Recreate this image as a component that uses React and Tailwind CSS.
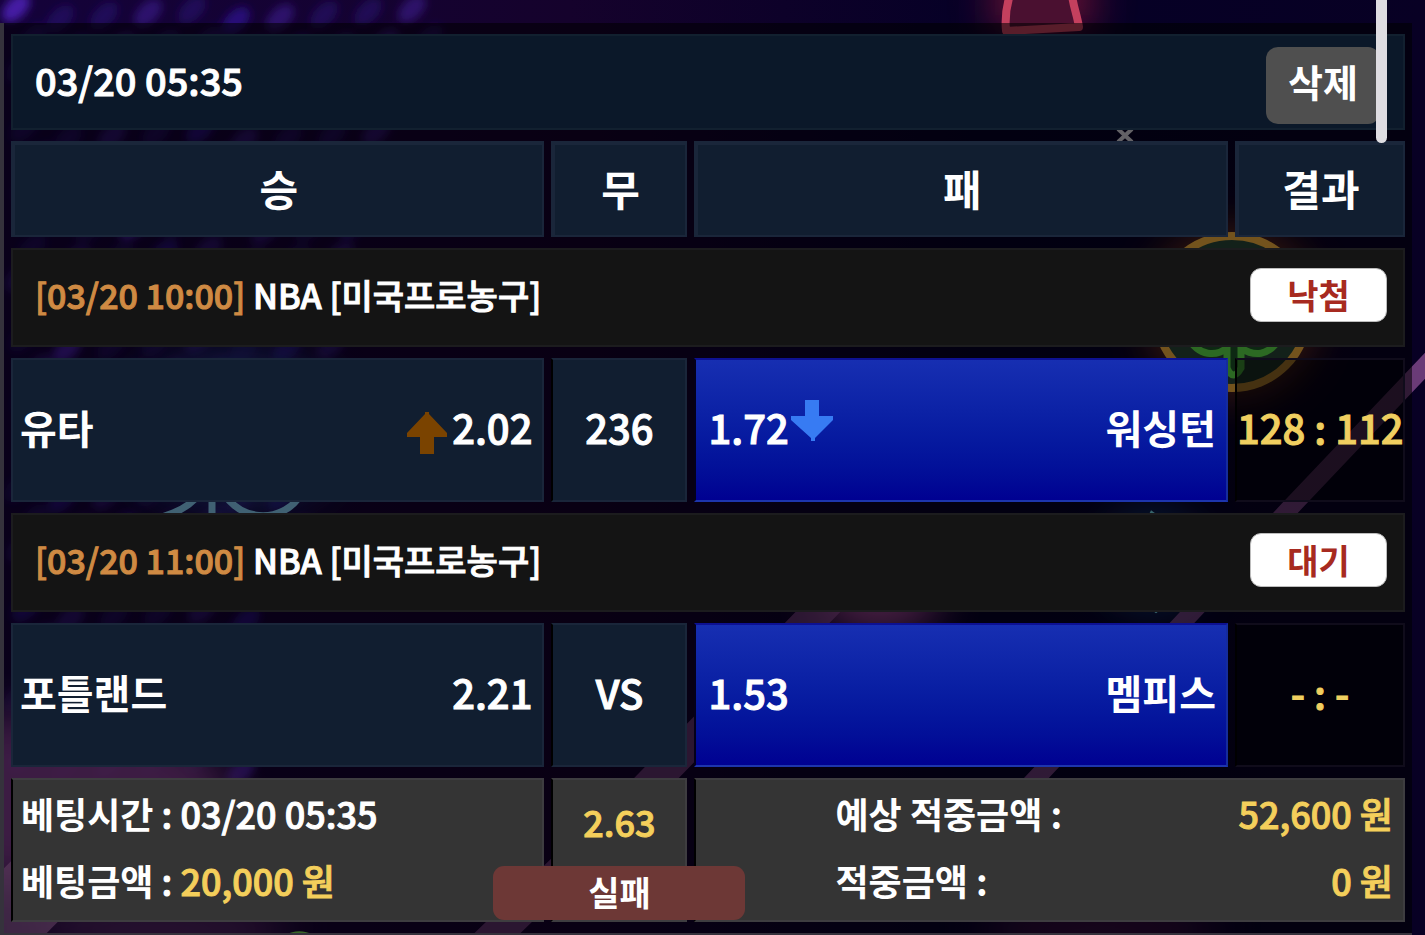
import React, { useState } from 'react';

const bet = {
  time: '03/20 05:35',
  amount: '20,000 원',
  odds: '2.63',
  expected: '52,600 원',
  won: '0 원',
  status: '실패',
};

const games = [
  { id: 1, date: '03/20 10:00', league: 'NBA [미국프로농구]', state: '낙첨', home: '유타', homeOdds: '2.02', up: true, line: '236', awayOdds: '1.72', down: true, away: '워싱턴', score: '128 : 112' },
  { id: 2, date: '03/20 11:00', league: 'NBA [미국프로농구]', state: '대기', home: '포틀랜드', homeOdds: '2.21', up: false, line: 'VS', awayOdds: '1.53', down: false, away: '멤피스', score: '- : -' },
];

function ArrowUp() {
  return (
    <svg width="42" height="42" viewBox="0 0 42 42" aria-hidden="true">
      <path d="M19 0h4v2l18 19v4H28v17H14V25H1v-4L19 2z" fill="#7a4300" />
    </svg>
  );
}

function ArrowDown() {
  return (
    <svg width="42" height="42" viewBox="0 0 42 42" aria-hidden="true">
      <path d="M14 0h14v16h14v4L24 38v3h-4v-3L0 20v-4h14z" fill="#377bf3" />
    </svg>
  );
}

// neon casino wallpaper behind the whole page
function Backdrop() {
  const streaks = [];
  for (let i = 0; i < 26; i++) {
    for (let j = 0; j < 10; j++) {
      const x = 16 + j * 44 + ((i * 17) % 30);
      const y = i * 30 + 8 + ((j * 11) % 14);
      if (x + y * 0.25 > 440) continue;
      streaks.push(
        <ellipse key={`${i}-${j}`} cx={x} cy={y} rx="17" ry="10" transform={`rotate(-45 ${x} ${y})`} fill={(i + j) % 3 === 0 ? '#4a1fb0' : '#2a1180'} opacity={(i * 7 + j * 3) % 5 === 0 ? 0.9 : 0.45} />
      );
    }
  }
  return (
    <svg className="absolute inset-0 h-full w-full" viewBox="0 0 1425 935" preserveAspectRatio="none" aria-hidden="true">
      <defs>
        <linearGradient id="night" x1="0" y1="0" x2="1" y2="0">
          <stop offset="0" stopColor="#14023a" />
          <stop offset="0.4" stopColor="#15022c" />
          <stop offset="0.7" stopColor="#050026" />
          <stop offset="1" stopColor="#080024" />
        </linearGradient>
        <filter id="soft"><feGaussianBlur stdDeviation="4" /></filter>
        <filter id="glow" x="-60%" y="-60%" width="220%" height="220%"><feGaussianBlur stdDeviation="22" /></filter>
      </defs>
      <rect width="1425" height="935" fill="url(#night)" />
      <g filter="url(#soft)">{streaks}</g>

      <ellipse cx="60" cy="800" rx="170" ry="90" fill="#9a4aa5" opacity="0.85" filter="url(#glow)" />
      <ellipse cx="160" cy="930" rx="130" ry="30" fill="#7a3a85" opacity="0.7" filter="url(#glow)" />
      <ellipse cx="1100" cy="930" rx="120" ry="30" fill="#6b1a5a" opacity="0.5" filter="url(#glow)" />
      <ellipse cx="235" cy="430" rx="110" ry="80" fill="#28409a" opacity="0.8" filter="url(#glow)" />
      <ellipse cx="1152" cy="560" rx="50" ry="50" fill="#1c5aa0" opacity="0.7" filter="url(#glow)" />
      <ellipse cx="880" cy="595" rx="60" ry="40" fill="#c65ab0" opacity="0.8" filter="url(#glow)" />

      <g fill="none">
        <path d="M1440 350 1290 508 950 870" stroke="#a05aa4" strokeWidth="18" opacity="0.65" />
        <path d="M880 548 640 795 480 950" stroke="#a05aa4" strokeWidth="32" opacity="0.55" />
        <path d="M-40 966 110 816" stroke="#d48ad4" strokeWidth="76" opacity="0.6" />
      </g>

      <path d="M995-30h95v60h-95z" fill="#c01a40" opacity="0.6" filter="url(#glow)" />
      <path d="M1010-5C1005 10 1005 20 1006 31L1079 27C1077 15 1073 5 1072-5" fill="#4a1030" stroke="#c4405e" strokeWidth="8" strokeLinejoin="round" />

      <path d="M1118 129l14 13M1132 129l-14 13" stroke="#dcd8e2" strokeWidth="4" />

      <circle cx="1232" cy="312" r="82" fill="#c05a14" opacity="0.7" filter="url(#glow)" />
      <circle cx="1232" cy="312" r="76" fill="#2c4a3a" stroke="#ffb840" strokeWidth="8" />
      <path d="M1232 248c-22 0-30 26-16 42-30-6-44 22-30 42 12 22 30 20 40 12v20q6 14 14 0v-20c12 8 28 10 40-12 14-20 0-48-30-42 14-16 6-42-20-42z" fill="#1e5a2a" stroke="#62e84e" strokeWidth="7" transform="translate(1 4)" />

      <path d="M150 520C185 512 200 500 204 480M212 520V480M220 480C228 524 288 528 304 488" stroke="#8fd8ff" strokeWidth="7" fill="none" />
      <path d="M1152 514l12 8v82l-8 6-8-6v-82z" fill="none" stroke="#7ae0f0" strokeWidth="5" />
      <path d="M278 945q20-20 45 0" fill="#2c6a28" stroke="#7fe05a" strokeWidth="7" />
    </svg>
  );
}

function StateBadge({ children }) {
  return (
    <span className="flex h-[54px] w-[137px] items-center justify-center rounded-[11px] border border-[#bdbdbd] bg-white text-[34px] font-bold leading-none text-[#a72a20]">
      {children}
    </span>
  );
}

function GameRows({ game }) {
  return (
    <>
      <tr>
        <td colSpan={4} className="h-[99px] border-2 border-[#1c1c1e] bg-[#141414] p-0 pr-4 pb-1.5 pl-[22px]">
          <div className="flex items-center justify-between text-[34px] font-medium">
            <p className="whitespace-nowrap [-webkit-text-stroke:1px]">
              <span className="text-[#cf8a43]">[{game.date}]</span> {game.league}
            </p>
            <StateBadge>{game.state}</StateBadge>
          </div>
        </td>
      </tr>
      <tr className="text-[40px] font-medium">
        <td className="h-[144px] border-2 border-[#1a263a] bg-[#111e30] p-0 pr-[10px] pb-1.5 pl-[7px]">
          <div className="flex items-center justify-between">
            <span className="font-bold">{game.home}</span>
            <span className="flex h-[54px] items-end gap-1 leading-[54px] [-webkit-text-stroke:1px]">
              {game.up && <ArrowUp />}
              {game.homeOdds}
            </span>
          </div>
        </td>
        <td className="border-2 border-[#1a263a] border-l-black bg-[#111e30] p-0 pb-1.5 text-center [-webkit-text-stroke:1px]">{game.line}</td>
        <td className="border-2 border-t-[#0d1193] border-r-[#152c9d] border-b-[#1d35ad] border-l-[#04001a] bg-linear-to-b from-[#172fb2] to-[#000091] bg-origin-border p-0 pr-[10px] pb-1.5 pl-3">
          <div className="flex items-center justify-between">
            <span className="flex h-[54px] items-start gap-0.5 leading-[54px] [-webkit-text-stroke:1px]">
              {game.awayOdds}
              {game.down && <ArrowDown />}
            </span>
            <span className="font-bold">{game.away}</span>
          </div>
        </td>
        <td className="border-2 border-[#100c1b] border-l-black bg-black/40 p-0 pb-1.5 text-center whitespace-nowrap text-[#f0cf60] [-webkit-text-stroke:1px]">{game.score}</td>
      </tr>
    </>
  );
}

export default function App() {
  const [deleted, setDeleted] = useState(false);

  return (
    <div className="relative min-h-screen overflow-hidden bg-[#050020] pt-[23px] pr-[13px] font-['Noto_Sans_CJK_KR',sans-serif] text-white">
      <Backdrop />

      <main className="relative border-b-2 border-l-4 border-[#35323c] bg-black/55">
        {!deleted && (
          <table className="w-full table-fixed border-separate border-spacing-x-[7px] border-spacing-y-[11px]">
            <colgroup>
              <col />
              <col className="w-[136px]" />
              <col />
              <col className="w-[170px]" />
            </colgroup>
            <thead>
              <tr>
                <td colSpan={4} className="h-[96px] border-2 border-[#12202f] bg-[#0b1829] p-0 pt-1.5 pr-[23px] pl-[22px]">
                  <div className="flex items-center justify-between">
                    <time className="pb-3 text-[38px] font-medium [-webkit-text-stroke:1px]">{bet.time}</time>
                    <button type="button" onClick={() => setDeleted(true)} className="h-[77px] w-[114px] rounded-xl bg-[#4f4f4f] pb-2.5 text-[38px] font-bold">
                      삭제
                    </button>
                  </div>
                </td>
              </tr>
              <tr>
                {['승', '무', '패', '결과'].map((name) => (
                  <th key={name} scope="col" className="h-[96px] border-t-4 border-r-2 border-b-2 border-l-4 border-[#1a263a] bg-[#111e30] p-0 pb-1.5 text-[42px] font-bold">
                    {name}
                  </th>
                ))}
              </tr>
            </thead>
            <tbody>
              {games.map((game) => <GameRows key={game.id} game={game} />)}
            </tbody>
            <tfoot>
              <tr className="text-[36px] leading-[67px] font-medium">
                <td className="h-[144px] border-2 border-[#3e3d40] border-l-black bg-[#343434] p-0 pb-1.5 pl-2 whitespace-nowrap">
                  <p><span className="font-bold">베팅시간</span> <span className="[-webkit-text-stroke:1px]">: {bet.time}</span></p>
                  <p><span className="font-bold">베팅금액</span> <span className="[-webkit-text-stroke:1px]">: <span className="text-[#f4cf5b]">{bet.amount}</span></span></p>
                </td>
                <td className="relative border-2 border-[#3e3d40] border-l-black bg-[#343434] p-0 pt-2 text-center align-top text-[#f4cf5b]">
                  <span className="[-webkit-text-stroke:1px]">{bet.odds}</span>
                  <span className="absolute bottom-0 left-1/2 flex h-[54px] w-[252px] -translate-x-1/2 items-center justify-center rounded-[11px] bg-[#6d3836] pb-0.5 text-[34px] leading-none font-bold text-white">
                    {bet.status}
                  </span>
                </td>
                <td colSpan={2} className="border-2 border-[#3e3d40] border-l-black bg-[#343434] p-0 pr-[10px] pb-1.5 pl-[139px] whitespace-nowrap">
                  <p className="flex justify-between">
                    <span className="font-bold">예상 적중금액 :</span>
                    <span className="text-[#f4cf5b] [-webkit-text-stroke:1px]">{bet.expected}</span>
                  </p>
                  <p className="flex justify-between">
                    <span className="font-bold">적중금액 :</span>
                    <span className="text-[#f4cf5b] [-webkit-text-stroke:1px]">{bet.won}</span>
                  </p>
                </td>
              </tr>
            </tfoot>
          </table>
        )}
      </main>

      {/* scroll thumb */}
      <div className="absolute top-0 right-[38px] h-[143px] w-[11px] rounded-b-full bg-[#dfdde2]" />
    </div>
  );
}
